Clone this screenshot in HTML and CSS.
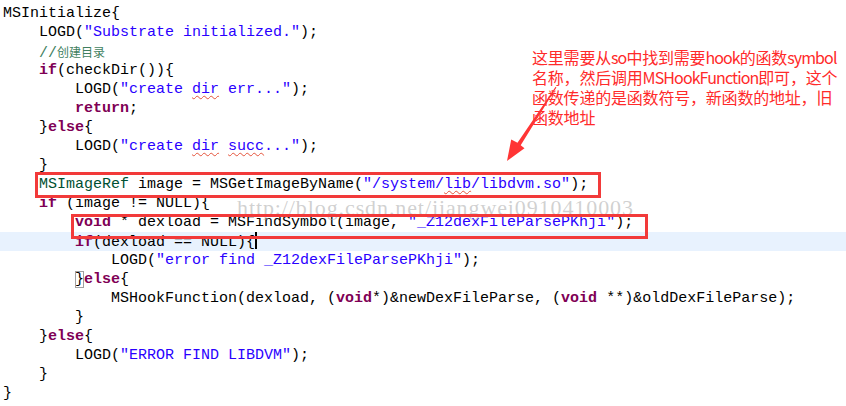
FILE: index.html
```html
<!DOCTYPE html>
<html lang="zh">

<head>
    <meta charset="UTF-8">
    <title>MSInitialize</title>
    <link rel="stylesheet" href="styles.css">
</head>

<body>
    <div class="editor">
        <div class="code">
            <div class="ln">MSInitialize{</div>
            <div class="ln">    LOGD(<span class="str">"Substrate initialized."</span>);</div>
            <div class="ln">    <span class="cmt">//<span class="cjk">创建目录</span></span></div>
            <div class="ln">    <span class="kw">if</span>(checkDir()){</div>
            <div class="ln">        LOGD(<span class="str">"create <span class="typo">dir</span> err..."</span>);</div>
            <div class="ln">        <span class="kw">return</span>;</div>
            <div class="ln">    }<span class="kw">else</span>{</div>
            <div class="ln">        LOGD(<span class="str">"create <span class="typo">dir</span> <span class="typo">succ</span>..."</span>);</div>
            <div class="ln">    }</div>
            <div class="ln">    <span class="type">MSImageRef</span> image = MSGetImageByName(<span class="str">"/system/<span class="typo">lib</span>/libdvm.so"</span>);</div>
            <div class="ln">    <span class="kw">if</span> (image != NULL){</div>
            <div class="ln">        <span class="kw">void</span> * dexload = MSFindSymbol(image, <span class="str">"_Z12dexFileParsePKhji"</span>);</div>
            <div class="ln current">        <span class="kw">if</span>(dexload == NULL){<span class="caret"></span></div>
            <div class="ln">            LOGD(<span class="str">"error find _Z12dexFileParsePKhji"</span>);</div>
            <div class="ln">        <span class="match">}</span><span class="kw">else</span>{</div>
            <div class="ln">            MSHookFunction(dexload, (<span class="kw">void</span>*)&amp;newDexFileParse, (<span class="kw">void</span> **)&amp;oldDexFileParse);</div>
            <div class="ln">        }</div>
            <div class="ln">    }<span class="kw">else</span>{</div>
            <div class="ln">        LOGD(<span class="str">"ERROR FIND LIBDVM"</span>);</div>
            <div class="ln">    }</div>
            <div class="ln">}</div>
        </div>

        <!-- marks drawn over the screenshot -->
        <div class="watermark">http://blog.csdn.net/jiangwei0910410003</div>
        <div class="mark mark-image"></div>
        <div class="mark mark-symbol"></div>
        <div class="note">这里需要从<span class="latin">so</span>中找到需要<span class="latin">hook</span>的函数<span class="latin">symbol</span><br>名称，然后调用<span class="latin">MSHookFunction</span>即可，这个<br>函数传递的是函数符号，新函数的地址，旧<br>函数地址</div>
        <svg class="arrow" viewBox="0 0 846 406" xmlns="http://www.w3.org/2000/svg">
            <polygon points="555.6,86.7 517.5,142.7 511.2,139.6 507,161 524.5,148.3 520.7,145.3 556.4,87.6" />
        </svg>
    </div>
</body>

</html>
```

FILE: styles.css
```css
body {
    margin: 0;
    background-color: #ffffff;
}

.editor {
    position: relative;
    width: 846px;
    height: 406px;
    overflow: hidden;
}

.code {
    padding-top: 4px;
    font-family: 'Liberation Mono', 'Noto Sans CJK SC', monospace;
    font-size: 15px;
    color: #000000;
}

.ln {
    height: 19px;
    line-height: 19px;
    padding-left: 3px;
    white-space: pre;
}

.current {
    background-color: #e8f2fe;
}

.kw {
    color: #7f0055;
    font-weight: bold;
}

.str {
    color: #2a00ff;
}

.cmt {
    color: #3f7f5f;
}

.cjk {
    font-family: 'Noto Sans CJK SC', sans-serif;
    font-size: 12px;
}

.type {
    color: #005032;
}

.typo {
    text-decoration: underline wavy #e5533b;
    text-decoration-thickness: 1px;
    text-underline-offset: 2px;
}

.match {
    outline: 1px solid #a0a0a0;
    outline-offset: -1px;
}

.caret {
    display: inline-block;
    width: 2px;
    height: 17px;
    vertical-align: -3px;
    background-color: #000000;
}

.watermark {
    position: absolute;
    left: 237px;
    top: 195px;
    font-family: 'Liberation Serif', serif;
    font-size: 22px;
    letter-spacing: 0.9px;
    color: rgba(170, 170, 170, 0.55);
}

.mark {
    position: absolute;
    border: 3px solid #f23a3a;
}

.mark-image {
    left: 35px;
    top: 172px;
    width: 560px;
    height: 20px;
}

.mark-symbol {
    left: 71px;
    top: 214px;
    width: 571px;
    height: 19px;
}

.note {
    position: absolute;
    left: 532px;
    top: 47px;
    font-family: 'Noto Sans CJK SC', sans-serif;
    font-size: 16px;
    line-height: 20px;
    letter-spacing: -0.2px;
    color: #ff2a2a;
    white-space: nowrap;
}

.latin {
    letter-spacing: -0.9px;
}

.arrow {
    position: absolute;
    left: 0;
    top: 0;
    width: 846px;
    height: 406px;
    fill: #ff3535;
}
```
